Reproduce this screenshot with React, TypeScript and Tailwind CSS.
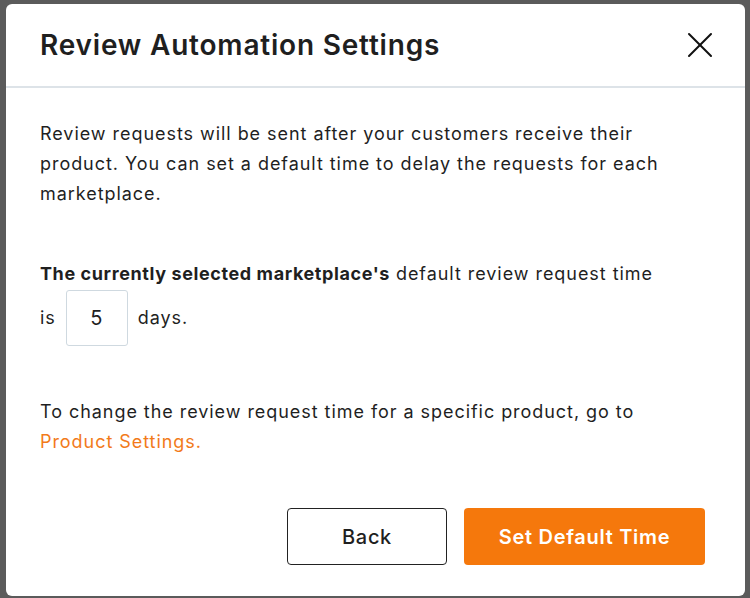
import { X } from "lucide-react";

export default function App() {
  return (
    <div className="h-[598px] w-[750px] bg-[#5b5b5b] pt-[4px] pl-[6px] pr-[5px] pb-[2px] overflow-hidden" style={{ fontFamily: "Inter, 'Liberation Sans', sans-serif" }}>
      <div className="flex h-full flex-col rounded-[6px] bg-white text-[#1f1f1f]">
        <div className="flex h-[84px] items-center justify-between border-b-2 border-[#dde3e8] pl-[34px] pr-[23px]">
          <h2 className="text-[28px] font-semibold tracking-[0.8px]">Review Automation Settings</h2>
          <button className="text-[#111]">
            <X size={44} strokeWidth={1.1} />
          </button>
        </div>

        <div className="flex flex-1 flex-col px-[34px] pt-[31px] text-[18px] leading-[30px] tracking-[0.95px]">
          <p className="w-[660px]">
            Review requests will be sent after your customers receive their product. You can set a default time to delay
            the requests for each marketplace.
          </p>

          <p className="mt-[50px] w-[660px]">
            <span className="font-bold tracking-[0.6px]">The currently selected marketplace's</span> default review request time
          </p>
          <div className="mt-[1px] flex items-center gap-[10px]">
            <span>is</span>
            <div className="flex h-[56px] w-[62px] items-center justify-center rounded-[3px] border border-[#cfd9e0] text-[20px]">
              5
            </div>
            <span>days.</span>
          </div>

          <p className="mt-[51px] w-[660px]">
            To change the review request time for a specific product, go to{" "}
            <a href="#" className="text-[#f27a1a]">Product Settings.</a>
          </p>

          <div className="mt-auto mb-[31px] flex justify-end gap-[17px] pr-[6px] tracking-[0.7px]">
            <button className="h-[57px] w-[160px] rounded-[4px] border-[1.5px] border-[#222] text-[20px] font-medium">
              Back
            </button>
            <button className="h-[57px] w-[241px] rounded-[4px] bg-[#f5780c] text-[20px] font-semibold text-white">
              Set Default Time
            </button>
          </div>
        </div>
      </div>
    </div>
  );
}
